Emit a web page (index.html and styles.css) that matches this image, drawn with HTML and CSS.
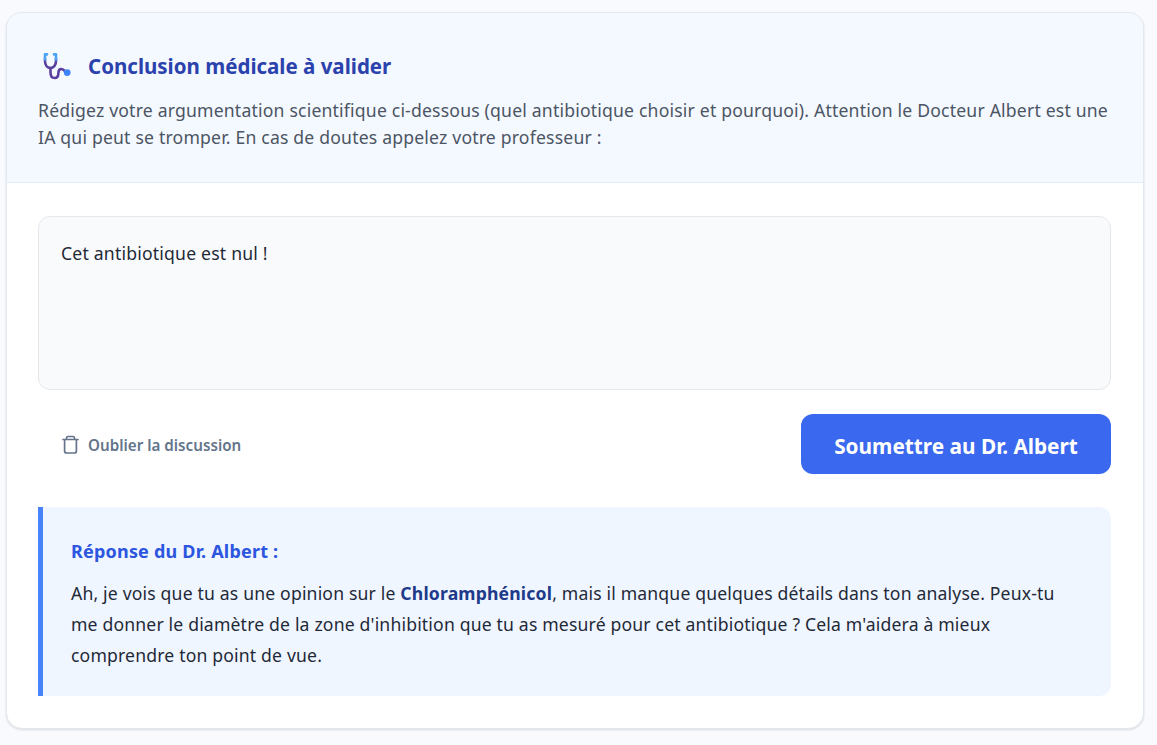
FILE: index.html
```html
<!DOCTYPE html>
<html lang="fr">
<head>
<meta charset="utf-8">
<title>Conclusion médicale</title>
<link rel="stylesheet" href="styles.css">
</head>
<body>
<main class="card">
  <header class="card-head">
    <div class="title-row">
      <svg class="steth" viewBox="0 1 30 28" width="30" height="28" aria-hidden="true">
        <path class="tube" d="M3 7V9C3 13.5 5.5 16 8.5 16C11.5 16 14 13.5 14 9V7"/>
        <path class="tube" d="M8.5 16V20.5C8.5 24 10.2 26 12.6 26C15 26 16.4 24 16.4 21C16.4 18.6 17.6 17 19.4 17C21 17 22 18 23 19.2"/>
        <path class="ear" d="M5 2.4H3V7.5M12 2.4H14V7.5"/>
        <circle class="dot" cx="25.2" cy="20.6" r="3.4"/>
      </svg>
      <h1 class="title">Conclusion médicale à valider</h1>
    </div>
    <p class="intro">Rédigez votre argumentation scientifique ci-dessous (quel antibiotique choisir et pourquoi). Attention le Docteur Albert est une IA qui peut se tromper. En cas de doutes appelez votre professeur :</p>
  </header>
  <section class="card-body">
    <div class="textbox">Cet antibiotique est nul !</div>
    <div class="actions">
      <button class="forget" type="button">
        <svg viewBox="0 0 18 20" width="18" height="20" aria-hidden="true"><path d="M1 4.5H16M4.5 4.5V3C4.5 2.1 5.1 1.5 6 1.5H11C11.9 1.5 12.5 2.1 12.5 3V4.5M2.6 4.5V16C2.6 17.2 3.4 18 4.6 18H12.4C13.6 18 14.4 17.2 14.4 16V4.5"/></svg>
        <span>Oublier la discussion</span>
      </button>
      <button class="submit" type="button">Soumettre au Dr. Albert</button>
    </div>
    <aside class="reply">
      <h2 class="reply-title">Réponse du Dr. Albert :</h2>
      <p class="reply-text">Ah, je vois que tu as une opinion sur le <strong>Chloramphénicol</strong>, mais il manque quelques détails dans ton analyse. Peux-tu me donner le diamètre de la zone d'inhibition que tu as mesuré pour cet antibiotique ? Cela m'aidera à mieux comprendre ton point de vue.</p>
    </aside>
  </section>
</main>
</body>
</html>
```
FILE: styles.css
```css
* { box-sizing: border-box; }
html, body { margin: 0; height: 100%; }
body {
  background: #f8fafd;
  font-family: "Noto Sans", "Open Sans", sans-serif;
  padding: 12px 13px 16px 6px;
  overflow: hidden;
}
.card {
  background: #fff;
  border: 1px solid #e2e8f0;
  border-radius: 16px;
  box-shadow: 0 1px 3px rgba(0,0,0,.08), 0 1px 2px rgba(0,0,0,.05);
  overflow: hidden;
  height: 717px;
}
.card-head {
  background: #f4f8ff;
  border-bottom: 1px solid #e1ebf8;
  padding: 32px 32px 0 31px;
  height: 170px;
}
.title-row { display: flex; align-items: center; gap: 16px; height: 44px; margin-bottom: 8px; margin-left: 4px; }
.steth { flex: none; }
.tube, .ear { fill: none; stroke-width: 2.6; stroke-linecap: round; stroke-linejoin: round; }
.tube { stroke: #5b3f9f; }
.ear { stroke: #4aa3f5; }
.dot { fill: #3f83f8; }
.title { margin: 0 0 2px; font-size: 20.5px; font-weight: 700; color: #2b42ad; line-height: 28px; }
.intro { margin: 0; font-size: 17.6px; letter-spacing: .19px; line-height: 27px; color: #4b5563; }
.card-body { padding: 33px 32px 0 31px; }
.textbox {
  height: 174px;
  background: #f9fafb;
  border: 1px solid #e5e7eb;
  border-radius: 12px;
  padding: 24px 22px;
  font-size: 17.6px;
  letter-spacing: .2px;
  line-height: 25px;
  color: #1f2937;
}
.actions { display: flex; justify-content: space-between; align-items: center; margin-top: 24px; }
.forget {
  display: flex; align-items: center; gap: 8px;
  background: none; border: 0; padding: 2px 0 0 24px;
  font: 600 15.2px "Noto Sans", sans-serif;
  color: #64748b;
}
.forget svg { fill: none; stroke: #64748b; stroke-width: 1.7; stroke-linecap: round; stroke-linejoin: round; }
.submit {
  width: 310px; height: 60px;
  padding: 4px 0 0;
  background: #3a68ee; color: #fff; border: 0; border-radius: 12px;
  font: 700 20.8px "Noto Sans", sans-serif;
}
.reply {
  margin-top: 33px;
  height: 189px;
  background: #eff6ff;
  border-left: 5px solid #4784fb;
  border-radius: 0 12px 12px 0;
  padding: 31px 28px 0;
}
.reply-title { margin: 0 0 13px; font-size: 18px; letter-spacing: .2px; font-weight: 700; color: #2c55e0; line-height: 27px; }
.reply-text { margin: 0; font-size: 17.6px; letter-spacing: .17px; line-height: 31px; color: #1f2937; }
.reply-text strong { color: #1e3a8a; font-weight: 700; }
```
